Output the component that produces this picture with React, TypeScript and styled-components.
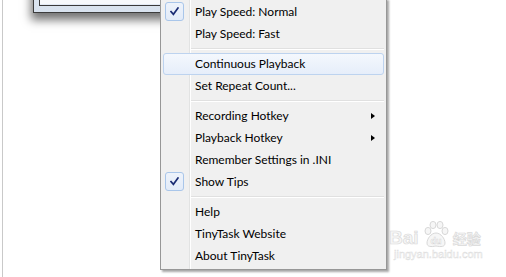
import React from "react";
import styled, { createGlobalStyle } from "styled-components";

const GlobalStyle = createGlobalStyle`
  html, body { margin: 0; padding: 0; background: #ffffff; }
  body { font-family: "Segoe UI", Lato, "Open Sans", sans-serif; }
`;

const Desktop = styled.div`
  position: relative;
  width: 503px;
  height: 277px;
  margin-left: 2px;
  border-left: 1px solid #c9c9c9;
  background: #ffffff;
  overflow: hidden;
`;

const Window = styled.div`
  position: absolute;
  left: 30px;
  top: -40px;
  width: 200px;
  height: 53px;
  box-sizing: border-box;
  display: flex;
  flex-direction: column;
  justify-content: flex-end;
  padding: 0 6px 6px 5px;
  border: 1px solid #3c3c3c;
  background: linear-gradient(#e4ebf4, #d8e2ee);
  box-shadow: -1px 6px 9px 1px rgba(0, 0, 0, 0.55);
`;

const ClientArea = styled.div`
  height: 30px;
  border: 1px solid #3a3a3a;
  background: #f7f9fc;
  box-shadow: inset 0 -1px 0 #e2eaf5;
`;

const Menu = styled.div`
  position: absolute;
  left: 157px;
  top: -2px;
  width: 227px;
  box-sizing: border-box;
  padding: 2px;
  border: 1px solid #979797;
  background: #f0f0f0;
  box-shadow: 2px 2px 2px rgba(0, 0, 0, 0.35);
  font-family: "Segoe UI", Lato, "Open Sans", sans-serif;
  font-size: 12px;
  color: #000;

  &::before {
    content: "";
    position: absolute;
    top: 0;
    bottom: 0;
    left: 28px;
    width: 1px;
    background: #e2e3e3;
    box-shadow: 1px 0 0 #ffffff;
  }
`;

const Item = styled.div<{ $hover?: boolean }>`
  position: relative;
  display: flex;
  align-items: center;
  height: 22px;
  box-sizing: border-box;
  border-radius: 3px;
  border: 1px solid ${(p) => (p.$hover ? "#bdd3ef" : "transparent")};
  background: ${(p) =>
    p.$hover ? "linear-gradient(#f4f8fd, #e6eefa)" : "transparent"};
  padding-left: 31px;
  white-space: nowrap;
  z-index: 1;
`;

const Label = styled.span`
  line-height: 20px;
`;

const CheckBox = styled.span`
  position: absolute;
  left: 1px;
  top: 0px;
  width: 19px;
  height: 19px;
  box-sizing: border-box;
  border: 1px solid #a9c6ea;
  border-radius: 3px;
  background: linear-gradient(#eef3fb, #e2ebf8);
  display: flex;
  align-items: center;
  justify-content: center;
`;

const Arrow = styled.span`
  margin-left: auto;
  margin-right: 8px;
  width: 0;
  height: 0;
  border-top: 3.5px solid transparent;
  border-bottom: 3.5px solid transparent;
  border-left: 4px solid #000;
`;

const Separator = styled.div`
  position: relative;
  height: 8px;
  z-index: 1;

  &::before {
    content: "";
    position: absolute;
    left: 28px;
    right: 0;
    top: 3px;
    height: 1px;
    background: #e0e0e0;
    box-shadow: 0 1px 0 #ffffff;
  }
`;

const Watermark = styled.div`
  position: absolute;
  left: 386px;
  top: 219px;
  display: grid;
  grid-template-columns: auto auto auto;
  align-items: center;
  column-gap: 1px;
  color: #f6f6f6;
  -webkit-text-stroke: 0.7px #dadada;
  pointer-events: none;
`;

const WmLatin = styled.span`
  font-family: "Liberation Sans", Arial, sans-serif;
  font-weight: bold;
  font-size: 19px;
  padding-top: 8px;
`;

const WmCjk = styled.span`
  font-family: "Noto Sans CJK SC", sans-serif;
  font-weight: bold;
  font-size: 14px;
  padding-top: 8px;
`;

const WmUrl = styled.span`
  grid-column: 1 / 4;
  font-family: "Liberation Sans", Arial, sans-serif;
  font-size: 11px;
  -webkit-text-stroke: 0.4px #dcdcdc;
  margin-top: -1px;
  padding-left: 5px;
`;

type Entry =
  | { kind: "item"; label: string; checked?: boolean; sub?: boolean; hover?: boolean }
  | { kind: "sep" };

const entries: Entry[] = [
  { kind: "item", label: "Play Speed: Normal", checked: true },
  { kind: "item", label: "Play Speed: Fast" },
  { kind: "sep" },
  { kind: "item", label: "Continuous Playback", hover: true },
  { kind: "item", label: "Set Repeat Count..." },
  { kind: "sep" },
  { kind: "item", label: "Recording Hotkey", sub: true },
  { kind: "item", label: "Playback Hotkey", sub: true },
  { kind: "item", label: "Remember Settings in .INI" },
  { kind: "item", label: "Show Tips", checked: true },
  { kind: "sep" },
  { kind: "item", label: "Help" },
  { kind: "item", label: "TinyTask Website" },
  { kind: "item", label: "About TinyTask" },
];

const Check = () => (
  <svg width="9" height="9" viewBox="0 0 9 9">
    <path
      d="M1 4.6 L3.4 7.3 L8 1"
      fill="none"
      stroke="#1a2c74"
      strokeWidth="1.7"
      strokeLinecap="square"
    />
  </svg>
);

const Paw = () => (
  <svg width="28" height="29" viewBox="0 0 28 29">
    <g fill="#f6f6f6" stroke="#d8d8d8" strokeWidth="1">
      <ellipse cx="6" cy="11" rx="3" ry="3.6" />
      <ellipse cx="11" cy="5" rx="3" ry="3.6" />
      <ellipse cx="18" cy="5" rx="3" ry="3.6" />
      <ellipse cx="23" cy="11" rx="3" ry="3.6" />
      <path d="M14 13 C9 13 5 19 5 23 C5 27 9 27 14 26 C19 27 23 27 23 23 C23 19 19 13 14 13 Z" />
    </g>
    <text
      x="14"
      y="24"
      textAnchor="middle"
      fontFamily="Liberation Sans, Arial, sans-serif"
      fontSize="9"
      fontWeight="bold"
      fill="#ffffff"
      stroke="#d6d6d6"
      strokeWidth="0.5"
    >
      du
    </text>
  </svg>
);

export default function App() {
  return (
    <>
      <GlobalStyle />
      <Desktop>
        <Window>
          <ClientArea />
        </Window>
        <Menu>
          {entries.map((e, i) =>
            e.kind === "sep" ? (
              <Separator key={i} />
            ) : (
              <Item key={i} $hover={e.hover}>
                {e.checked && (
                  <CheckBox>
                    <Check />
                  </CheckBox>
                )}
                <Label>{e.label}</Label>
                {e.sub && <Arrow />}
              </Item>
            )
          )}
        </Menu>
        <Watermark>
          <WmLatin>Bai</WmLatin>
          <Paw />
          <WmCjk>经验</WmCjk>
          <WmUrl>jingyan.baidu.com</WmUrl>
        </Watermark>
      </Desktop>
    </>
  );
}
